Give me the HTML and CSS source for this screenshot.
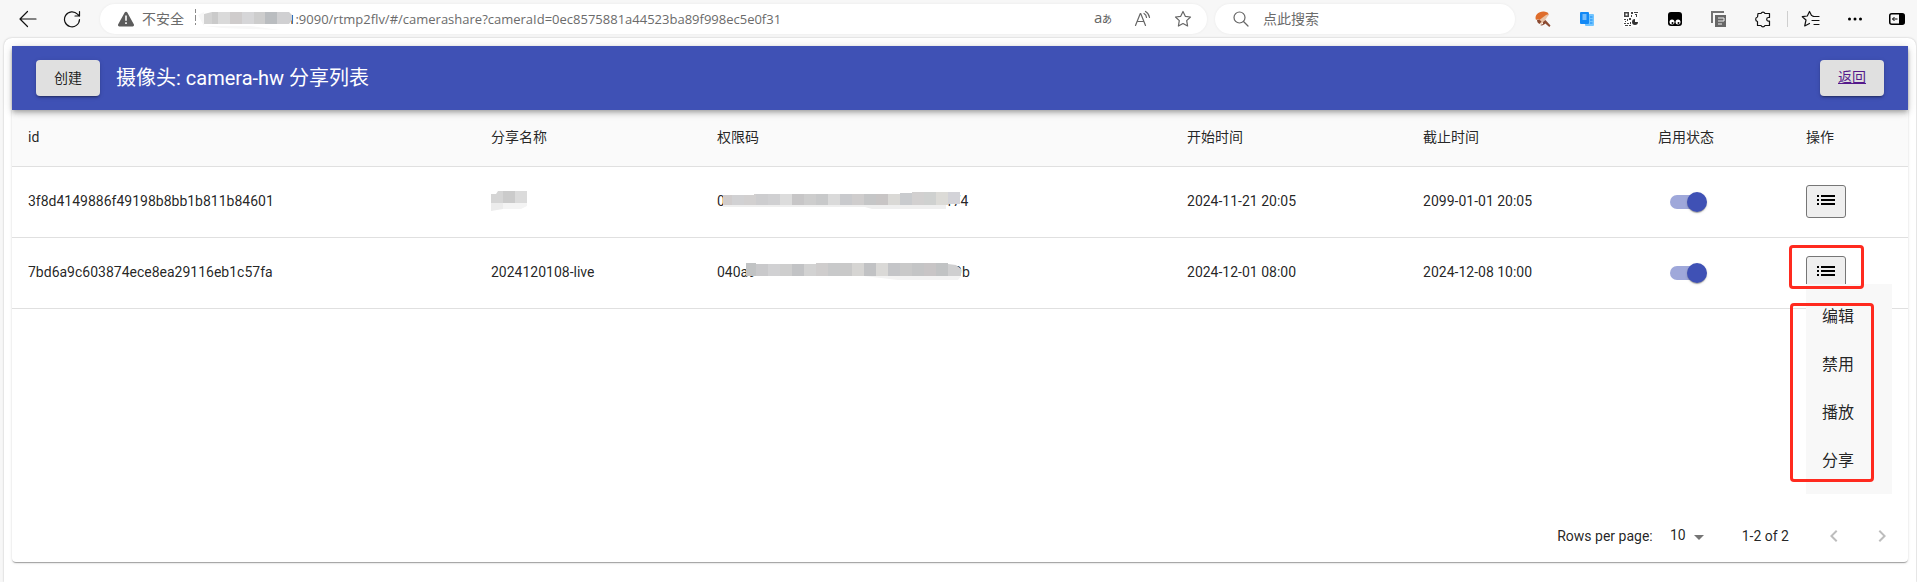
FILE: index.html
```html
<!DOCTYPE html>
<html lang="zh-CN">
<head>
<meta charset="utf-8">
<title>分享列表</title>
<link rel="stylesheet" href="styles.css">
</head>
<body>
<header class="browser">
  <nav class="nav">
    <button class="tool tool-nav" aria-label="后退"><svg width="18" height="18" viewBox="0 0 18 18" class="line dark"><path d="M17 9H1.5M8.5 1.5 1 9l7.500 7.500"/></svg></button>
    <button class="tool tool-nav" aria-label="刷新"><svg width="18" height="18" viewBox="0 0 18 18" class="line dark"><path d="M16.500 9.500A7.500 7.500 0 1 1 14.500 4.200L16.300 6M16.500 1.500V6H12"/></svg></button>
  </nav>
  <div class="address">
    <svg width="18" height="16" viewBox="0 0 18 16" class="warn"><path d="M7.700 1.400a1.500 1.500 0 0 1 2.600 0l6.500 11.800a1.500 1.500 0 0 1-1.300 2.300h-13a1.500 1.500 0 0 1-1.300-2.300z" fill="#5c5c5c"/><path d="M8.200 4.500h1.600v5.200H8.200zM8.200 11.200h1.600v1.700H8.200z" fill="#fff"/></svg>
    <span class="insecure">不安全</span>
    <svg class="mosaic mosaic-host" width="98" height="22" viewBox="0 0 98 22"><path d="M.5 1v4M.5 7v6M.5 15v2" stroke="#8a8a8a"/><path d="M3 7 9 4v14l18 2 58 2-30-4H9z" fill="#f7f7f7"/><path fill="#d2d2d2" d="M9 6l8-2v12H9z"/><path fill="#cacaca" d="M17 4h6v12h-6z"/><path fill="#dadada" d="M23 4h12v12H23z"/><path fill="#cfcccc" d="M35 4h12v12H35z"/><path fill="#d6d6d8" d="M47 4h12v12H47z"/><path fill="#cdcdcd" d="M59 4h11v12H59z"/><path fill="#babdc0" d="M70 4h12v12H70z"/><path fill="#d0d0d2" d="M82 4h12l3 3v5l-3 4H82z"/></svg>
    <span class="url"><b>1</b>:9090/rtmp2flv/#/camerashare?cameraId=0ec8575881a44523ba89f998ec5e0f31</span>
    <button class="tool tool-url" aria-label="翻译"><svg width="24" height="24" viewBox="0 0 24 24"><text x="3" y="16" class="glyph-a">a</text><text x="11" y="16" class="glyph-ja">あ</text></svg></button>
    <button class="tool tool-url" aria-label="朗读"><svg width="18" height="18" viewBox="0 0 18 18" class="line gray"><path d="m1.500 15.500 4.800-12h.4l4.800 12M3.200 11.500h6.600M10 3.500a5 5 0 0 1 2.500 4M11.500 1.500a8 8 0 0 1 4 6"/></svg></button>
    <button class="tool tool-url" aria-label="收藏"><svg width="18" height="18" viewBox="0 0 18 18" class="line gray"><path d="m9 1.500 2.300 4.800 5.200.7-3.800 3.600.9 5.400L9 13.500 4.400 16l.9-5.400L1.500 7l5.200-.7z"/></svg></button>
  </div>
  <label class="search">
    <svg width="16" height="16" viewBox="0 0 16 16" class="line gray"><circle cx="6.500" cy="6.500" r="5.500"/><path d="m10.500 10.500 4.500 4.500"/></svg>
    <input type="text" placeholder="点此搜索" aria-label="点此搜索">
  </label>
  <div class="tools">
    <button class="tool" aria-label="画笔"><svg width="18" height="18" viewBox="0 0 18 18"><path d="M2 10C0 5 5 1 10 1.500c3 .3 5 1.500 4.500 3.500L7 11.500C5.500 9.500 4 9 2 10z" fill="#df6d2b"/><path d="m4 11 8-6 3-1-5 8-3 2z" fill="#e9c3a6"/><path d="M3 10c2-.5 3 0 4.500 1.500L5.500 14C4 13 3 12 3 10zM9 12l2.500-2 5 5.500-1.200 1.500-4-3.500C10 15 8 16 6 15l3-1z" fill="#8b4a31"/></svg></button>
    <button class="tool" aria-label="翻译扩展"><svg width="16" height="16" viewBox="0 0 16 16"><rect x="6" y="3" width="9" height="12" rx="1" fill="#73c5ff"/><rect x="1" y="1" width="9" height="12" rx="1" fill="#1389f5"/><path d="M3.500 4h4M3.500 6h4M3.500 8h4" stroke="#d8eeff"/><path d="M11 6h2.500M11 9h2.500M11 12h2.500" stroke="#1389f5"/></svg></button>
    <button class="tool" aria-label="二维码"><svg width="16" height="16" viewBox="0 0 16 16"><path d="M0 0h16v16H0z" fill="#fff"/><path d="M1 1h5v5H1zM2.500 2.500v2h2v-2zM8 1h2v2H8zM11 1h4v1h-4zM12 3h2v3h-1V4h-1zM8 4h1v2H8zM1 8h2v1H1zM4 8h1v2H4zM6 7h2v2H6zM2 10h1v1H2zM1 12h2v1H1zM4 12h2v1H4zM2 14h3v1H2zM7 11h1v2H7zM6 14h2v1H6z" fill="#444" fill-rule="evenodd"/><path d="M12 8v3h3a3 3 0 1 1-3-3z" fill="#333"/></svg></button>
    <button class="tool" aria-label="脚本"><svg width="16" height="16" viewBox="0 0 16 16"><rect x="1" y="1" width="14" height="14" rx="3"/><circle cx="5" cy="11" r="2.500" fill="#fff"/><circle cx="11" cy="11" r="2.500" fill="#fff"/><circle cx="5.500" cy="12" r="1"/><circle cx="11.500" cy="12" r="1"/></svg></button>
    <button class="tool" aria-label="复制"><svg width="18" height="18" viewBox="0 0 18 18"><path d="M2 13V2h12" fill="none" stroke="#737373" stroke-width="2"/><path d="M5 5h11v12H5z" fill="#676767"/><path d="M8 8h6v3H8M8 14h4" fill="none" stroke="#f1f1f1"/></svg></button>
    <button class="tool" aria-label="扩展"><svg width="18" height="18" viewBox="0 0 18 18" class="line dark"><path d="M4 3.500h3a2.200 2.200 0 0 1 4 0h4.500v4h-1a1.800 1.800 0 0 0 0 3.600h1v4.400H11a2.200 2.200 0 0 1-4 0H3.500v-4a2.300 2.300 0 0 1 0-4.500z"/></svg></button>
    <span class="separator"></span>
    <button class="tool" aria-label="收藏夹"><svg width="20" height="18" viewBox="0 0 20 18" class="line dark"><path d="M12 6 10.500 5.500 8.500 1.500 6.300 6l-5 .7L5 10l-1.300 6L8.500 13.500M12 6.500h6M11 10.500h7M13 14.500h5"/></svg></button>
    <button class="tool" aria-label="更多"><svg width="16" height="16" viewBox="0 0 16 16"><circle cx="2.500" cy="8" r="1.500"/><circle cx="8" cy="8" r="1.500"/><circle cx="13.500" cy="8" r="1.500"/></svg></button>
    <button class="tool tool-side" aria-label="侧边栏"><svg width="16" height="14" viewBox="0 0 16 14"><rect x=".75" y="1.750" width="14.500" height="10.500" rx="2" fill="none" stroke="#000" stroke-width="1.500"/><path d="M10 2h5v10h-5z"/><path d="M8.500 7H3.500M5.500 5 3.500 7l2 2" fill="none" stroke="#000"/></svg></button>
  </div>
</header>

<div class="page">
  <main class="card">
    <div class="appbar">
      <button class="button">创建</button>
      <h1>摄像头: camera-hw 分享列表</h1>
      <a class="button back" href="#/camera">返回</a>
    </div>
    <div class="table-wrap">
      <table>
        <colgroup><col class="c-id"><col class="c-name"><col class="c-code"><col class="c-start"><col class="c-end"><col class="c-state"><col class="c-ops"></colgroup>
        <thead>
          <tr><th>id</th><th>分享名称</th><th>权限码</th><th>开始时间</th><th>截止时间</th><th>启用状态</th><th>操作</th></tr>
        </thead>
        <tbody>
          <tr>
            <td>3f8d4149886f49198b8bb1b811b84601</td>
            <td><svg class="mosaic mosaic-name" width="36" height="20" viewBox="0 0 36 20"><path d="M0 3h5l2-3h5v12H0z" fill="#d5d5d5"/><path d="M12 0h12v12H12z" fill="#cbcbcb"/><path d="M24 0h12v12H24z" fill="#dbdbdb"/><path d="M0 12h12v6l-12 2z" fill="#ececec"/><path d="M12 12h24v3l-6 3H12z" fill="#f4f4f4"/></svg></td>
            <td><div class="code"><span>0</span><svg class="mosaic mosaic-code" width="237" height="18" viewBox="0 0 237 18"><path d="M0 3h9v10H0z" fill="#d0cccc"/><path d="M9 3h12v10H9z" fill="#d1d1d3"/><path d="M21 3h10V2h2v11H21z" fill="#d2d0d0"/><path d="M33 2h12v11H33z" fill="#cdcdcf"/><path d="M45 2h12v11H45z" fill="#d0d0d2"/><path d="M57 2h12v11H57z" fill="#dcdcdc"/><path d="M69 2h12v11H69z" fill="#c7c6c7"/><path d="M81 2h12v11H81z" fill="#cdcdcd"/><path d="M93 2h12v11H93z" fill="#c8c9ca"/><path d="M105 2h12v11h-12z" fill="#dadada"/><path d="M117 2h12v11h-12z" fill="#c9cacd"/><path d="M129 2h12v11h-12z" fill="#cfcdcd"/><path d="M141 2h12v11h-12z" fill="#c5c6c7"/><path d="M153 2h12v11h-12z" fill="#c8c5c5"/><path d="M165 2h12v11h-12z" fill="#dad9d6"/><path d="M177 1h12v12h-12z" fill="#c9cbce"/><path d="M189 0h12v13h-12z" fill="#d2d0d0"/><path d="M201 0h12v13h-12z" fill="#cfd1d0"/><path d="M213 0h12v13h-12z" fill="#dcdbd7"/><path d="M225 0h12v12h-12z" fill="#d3d3d8"/><path d="M0 13h223v4h-74l-7-2H0z" fill="#efefef"/></svg><span>174</span></div></td>
            <td>2024-11-21 20:05</td><td>2099-01-01 20:05</td>
            <td><input class="switch" type="checkbox" role="switch" aria-label="启用状态" checked></td>
            <td><div class="ops"><button class="list" aria-label="操作"><svg width="18" height="10" viewBox="0 0 18 10"><path d="M0 0h2v2H0zM4 0h14v2H4zM0 4h2v2H0zM4 4h14v2H4zM0 8h2v2H0zM4 8h14v2H4z"/></svg></button></div></td>
          </tr>
          <tr>
            <td>7bd6a9c603874ece8ea29116eb1c57fa</td>
            <td>2024120108-live</td>
            <td><div class="code"><span>040a9</span><svg class="mosaic mosaic-tail" width="216" height="18" viewBox="0 0 216 18"><path d="M0 0h10v13H0z" fill="#c1c3c4"/><path d="M10 1h12v12H10z" fill="#c9c9cb"/><path d="M22 1h12v12H22z" fill="#d1d1d3"/><path d="M34 1h12v12H34z" fill="#cecece"/><path d="M46 1h12v12H46z" fill="#c2c3c5"/><path d="M58 1h12v12H58z" fill="#d2d2d2"/><path d="M70 0h12v13H70z" fill="#cfcdcd"/><path d="M82 0h12v13H82z" fill="#c8c9ca"/><path d="M94 0h12v13H94z" fill="#c9c9c9"/><path d="M106 0h12v13h-12z" fill="#d6d5d3"/><path d="M118 0h12v13h-12z" fill="#c1c2c4"/><path d="M130 0h12v13h-12z" fill="#dad9d7"/><path d="M142 0h12v13h-12z" fill="#c4c5c8"/><path d="M154 0h12v13h-12z" fill="#c9c9c9"/><path d="M166 0h12v13h-12z" fill="#c4c5c6"/><path d="M178 0h12v13h-12z" fill="#c8c5c6"/><path d="M190 0h12v13h-12z" fill="#c1c3c4"/><path d="M202 1l8 1 5 4v7h-13z" fill="#cfcfd0"/><path d="M118 13h97l-3 4h-60z" fill="#f3f3f3"/></svg><span>9b</span></div></td>
            <td>2024-12-01 08:00</td><td>2024-12-08 10:00</td>
            <td><input class="switch" type="checkbox" role="switch" aria-label="启用状态" checked></td>
            <td><div class="ops"><button class="list" aria-label="操作" aria-expanded="true"><svg width="18" height="10" viewBox="0 0 18 10"><path d="M0 0h2v2H0zM4 0h14v2H4zM0 4h2v2H0zM4 4h14v2H4zM0 8h2v2H0zM4 8h14v2H4z"/></svg></button>
              <div class="menu">
                <button>编辑</button><button>禁用</button><button>播放</button><button>分享</button>
                <span class="mark mark-menu"></span>
              </div>
              <span class="mark mark-button"></span>
            </div></td>
          </tr>
        </tbody>
      </table>
    </div>
    <footer class="pagination">
      <label for="rows">Rows per page:</label>
      <div class="select"><select id="rows"><option>10</option></select><svg width="10" height="5" viewBox="0 0 10 5"><path d="M0 0h10L5 5z" fill="#757575"/></svg></div>
      <span class="range">1-2 of 2</span>
      <button class="pager" aria-label="上一页" disabled><svg width="24" height="24" viewBox="0 0 24 24"><path d="M15.410 7.410 14 6l-6 6 6 6 1.410-1.410L10.830 12z"/></svg></button>
      <button class="pager" aria-label="下一页" disabled><svg width="24" height="24" viewBox="0 0 24 24"><path d="M10 6 8.590 7.410 13.170 12l-4.580 4.590L10 18l6-6z"/></svg></button>
    </footer>
  </main>
</div>
</body>
</html>
```

FILE: styles.css
```css
* { box-sizing: border-box; }
html { height: 100%; }
body {
  margin: 0;
  min-height: 100%;
  display: flex;
  flex-direction: column;
  background: #f7f7f7;
  color: rgba(0, 0, 0, .87);
  font: 14px/20px Roboto, "Noto Sans CJK SC", sans-serif;
}
button, input, select { font: inherit; color: inherit; }
svg { flex: none; display: block; }

/* Browser toolbar */
.browser { display: flex; align-items: center; height: 38px; flex: none; }
.nav { display: flex; gap: 8px; padding: 0 10px; }
.tool {
  display: flex; align-items: center; justify-content: center;
  width: 44px; height: 30px; padding: 0; border: 0; background: none;
}
.tool-nav { width: 36px; }
.tool-side { width: 40px; }
.line { fill: none; stroke-width: 1.2; stroke-linejoin: round; stroke-linecap: round; }
.dark { stroke: #111; }
.gray { stroke: #666; }
.address, .search {
  display: flex; align-items: center; height: 30px;
  background: #fff; border-radius: 15px; box-shadow: 0 0 3px rgba(0, 0, 0, .06);
  font-family: "Open Sans", "Noto Sans CJK SC", sans-serif; font-size: 13px; color: #6b6b6b;
}
.address { flex: 1; padding: 0 4px 0 17px; min-width: 0; }
.insecure { margin: 0 11px 0 7px; font-size: 14px; white-space: nowrap; }
.url { flex: 1; margin-left: -5px; white-space: nowrap; overflow: hidden; }
.url b { font-weight: 400; color: #000; }
.tool-url { flex: none; width: 40px; }
.glyph-a { font: 15px "Open Sans", sans-serif; fill: #666; }
.glyph-ja { font: 10px "Noto Sans CJK JP", sans-serif; fill: #555; }
.search { flex: none; width: 300px; margin-left: 8px; padding: 0 18px; gap: 14px; }
.search input { flex: 1; min-width: 0; border: 0; padding: 0; outline: 0; background: none; font-size: 14px; }
.search input::placeholder { color: #6b6b6b; opacity: 1; }
.tools { display: flex; align-items: center; margin-left: 6px; }
.separator { width: 1px; height: 16px; margin: 0 1px 0 2px; background: #cfcfcf; }
.mosaic { position: relative; z-index: 1; }

/* Page frame */
.page {
  flex: 1; margin: 0 1px 0 4px; padding: 8px 8px 20px;
  background: #fff; border-radius: 8px 8px 0 0; box-shadow: 0 0 2px rgba(0, 0, 0, .25);
}
.card {
  border-radius: 4px;
  box-shadow: 0 2px 1px -1px rgba(0, 0, 0, .2), 0 1px 1px rgba(0, 0, 0, .14), 0 1px 3px rgba(0, 0, 0, .12);
}
.appbar {
  position: relative; display: flex; align-items: center; gap: 16px;
  height: 64px; padding: 0 24px; background: #3f51b5; color: #fff;
  box-shadow: 0 2px 4px -1px rgba(0, 0, 0, .2), 0 4px 5px rgba(0, 0, 0, .14), 0 1px 10px rgba(0, 0, 0, .12);
}
.appbar h1 { flex: 1; margin: 0; font-size: 20px; line-height: 32px; font-weight: 400; }
.button {
  min-width: 64px; height: 36px; padding: 0 16px; border: 0; border-radius: 4px;
  background: #e0e0e0; color: rgba(0, 0, 0, .87); line-height: 34px; text-align: center;
  box-shadow: 0 3px 1px -2px rgba(0, 0, 0, .2), 0 2px 2px rgba(0, 0, 0, .14), 0 1px 5px rgba(0, 0, 0, .12);
}
.back { color: #551a8b; }

/* Table */
.table-wrap { padding-bottom: 200px; }
table { width: 100%; table-layout: fixed; border-collapse: separate; border-spacing: 0; }
.c-id { width: 24.42%; }
.c-name { width: 11.92%; }
.c-code { width: 24.79%; }
.c-start { width: 12.45%; }
.c-end { width: 12.39%; }
.c-state { width: 7.81%; }
.c-ops { width: 6.22%; }
th, td { padding: 0 16px 2px; text-align: left; font-weight: 400; border-bottom: 1px solid #e0e0e0; white-space: nowrap; }
th { height: 57px; background: #fafafa; }
td { height: 71px; }
.code { display: flex; align-items: center; }
.mosaic-code { margin: 0 -15px 0 -2px; }
.mosaic-tail { margin: 0 -8px 0 -10px; }

.switch {
  appearance: none; position: relative; display: block;
  width: 34px; height: 14px; margin: 2px 12px 0; border-radius: 7px; background: #9fa8da;
}
.switch::after {
  content: ""; position: absolute; right: -3px; top: -3px;
  width: 20px; height: 20px; border-radius: 50%; background: #3f51b5;
  box-shadow: 0 2px 1px -1px rgba(0, 0, 0, .2), 0 1px 1px rgba(0, 0, 0, .14), 0 1px 3px rgba(0, 0, 0, .12);
}
.ops { position: relative; }
.list {
  display: flex; align-items: center; justify-content: center;
  width: 40px; height: 33px; padding: 0 0 2px; border: 1px solid #767676; border-radius: 3px;
  background: #efefef; color: #000;
}
.menu {
  position: absolute; z-index: 2; left: 0; top: 28px;
  display: flex; flex-direction: column; width: 86px; padding: 9px 0; background: #f8f8f8;
}
.menu button { height: 48px; padding: 0 16px; border: 0; background: none; font-size: 16px; line-height: 24px; text-align: left; }
.mark { position: absolute; z-index: 3; border: 3px solid #ff2a1f; border-radius: 4px; pointer-events: none; }
.mark-button { left: -17px; top: -11px; width: 75px; height: 44px; }
.mark-menu { left: -16px; top: 19px; width: 84px; height: 179px; }

/* Pagination */
.pagination { display: flex; align-items: center; justify-content: flex-end; height: 53px; padding-right: 2px; }
.select { position: relative; margin: 0 32px 0 8px; }
.select select {
  display: block; appearance: none; width: 49px; height: 24px; padding: 0 24px 2px 8px;
  border: 0; outline: 0; background: none; text-align: right;
}
.select svg { position: absolute; right: 6px; top: 11px; pointer-events: none; }
.range { margin-right: 21px; }
.pager { display: flex; justify-content: center; width: 48px; padding: 0; border: 0; background: none; fill: #bdbdbd; }
```
